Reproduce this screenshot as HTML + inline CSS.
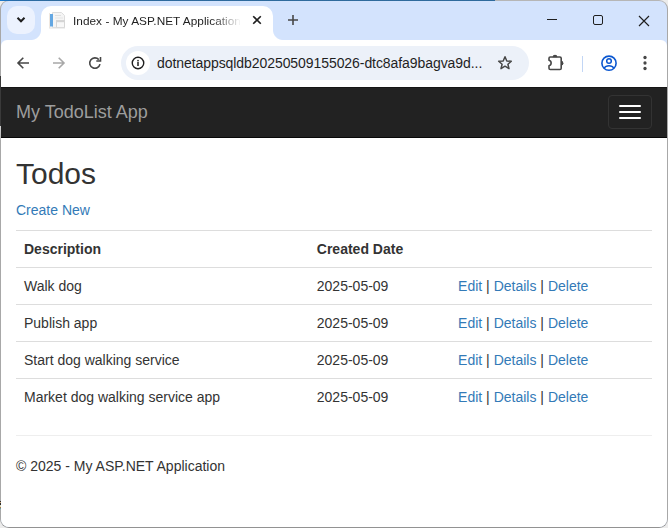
<!DOCTYPE html>
<html><head><meta charset="utf-8">
<style>
*{box-sizing:border-box}
html,body{margin:0;padding:0}
body{width:668px;height:528px;position:relative;overflow:hidden;background:#ececec;font-family:"Liberation Sans",sans-serif}
.abs{position:absolute}
#win{position:absolute;left:0;top:0;width:668px;height:528px;border:1px solid #a8a8a8;border-top-color:#b6b6b6;border-bottom-color:#929292;border-radius:9px;overflow:hidden;background:#d3e3fd}
#topline{position:absolute;left:0;top:0;width:495px;height:1px;background:linear-gradient(90deg,#1878d0 0,#2a6ca6 14px,#2f6b9e 60px,#2e6a9c 100%)}
#toolbar{position:absolute;left:0;top:39px;width:666px;height:47px;background:#fff;border-radius:6px 6px 0 0}
#viewport{position:absolute;left:0;top:86px;width:666px;height:440px;background:#fff;overflow:hidden;font-size:14px;line-height:1.42857143;color:#333}
.tabsearch{left:6px;top:5px;width:28px;height:28px;border-radius:10px;background:#ecf2fe}
.tab{left:40px;top:5px;width:232px;height:35px;background:#fff;border-radius:10px 10px 0 0}
.flare{width:10px;height:10px;top:29px}
.fl{background:radial-gradient(circle at 0 0,transparent 9.5px,#fff 10.5px)}
.fr{background:radial-gradient(circle at 100% 0,transparent 9.5px,#fff 10.5px)}
.title{left:72px;top:12px;font-size:11.8px;line-height:16px;color:#1f1f1f;white-space:nowrap;width:168px;overflow:hidden;letter-spacing:0.04px}
.title span{display:block;-webkit-mask-image:linear-gradient(90deg,#000 140px,transparent 168px)}
.url{left:156px;top:53px;font-size:14px;line-height:18px;color:#1f1f1f;white-space:nowrap;letter-spacing:-0.07px}
/* page */
.navbar{position:absolute;left:0;top:0;width:666px;height:51px;background:#222;border-bottom:1px solid #080808}
.brand{position:absolute;left:15px;top:15px;font-size:18px;line-height:20px;color:#9d9d9d}
.toggle{position:absolute;right:15px;top:8px;width:44px;height:34px;border:1px solid #333;border-radius:4px;padding:9px 10px}
.toggle i{display:block;width:22px;height:2px;background:#fff;border-radius:1px}
.toggle i+i{margin-top:4px}
.content{position:absolute;left:0;top:50px;width:666px;padding:0 15px}
h2{font-size:30px;font-weight:500;line-height:1.1;margin:20px 0 10px;font-family:inherit;color:#333}
p{margin:0 0 10px}
a{color:#337ab7;text-decoration:none}
table{width:100%;border-collapse:collapse;border-spacing:0;margin-bottom:20px}
th,td{padding:8px;line-height:1.42857143;vertical-align:top;border-top:1px solid #ddd;text-align:left}
th{font-weight:bold}
hr{margin:20px 0;border:0;border-top:1px solid #eee;height:0}
</style></head>
<body>
<div id="win">
  <!-- tab strip -->
  <div class="abs tabsearch"></div>
  <svg class="abs" style="left:12px;top:11px" width="16" height="16" viewBox="0 0 16 16"><path d="M4.5 5.8 L8 9.3 L11.5 5.8" fill="none" stroke="#1f1f1f" stroke-width="2"/></svg>
  <div class="abs tab"></div>
  <div class="abs flare fl" style="left:30px"></div>
  <div class="abs flare fr" style="left:272px"></div>
  <!-- favicon -->
  <svg class="abs" style="left:45px;top:8px" width="22" height="22" viewBox="0 0 22 22">
    <rect x="3" y="4" width="1" height="15" fill="#f0e8e0"/>
    <path d="M6.5 3.5 H15.5 L18.5 6.5 V18.5 H6.5 Z" fill="#f5f5f5" stroke="#dddddd" stroke-width="1"/>
    <rect x="4" y="5" width="3" height="12.5" fill="#64a7e2"/>
    <rect x="9" y="6" width="6" height="1" fill="#e0e0e0"/>
    <rect x="9" y="8.5" width="8" height="1" fill="#e6e6e6"/>
    <rect x="10.5" y="11.5" width="8" height="7" fill="#f8f8f8" stroke="#d6d6d6" stroke-width="1"/>
    <rect x="11" y="12" width="7" height="1.2" fill="#d4d4d4"/>
    <rect x="3" y="18.5" width="16" height="1" fill="#e2e2e2"/>
  </svg>
  <div class="abs title"><span>Index - My ASP.NET Application</span></div>
  <svg class="abs" style="left:249px;top:12px" width="14" height="14" viewBox="0 0 14 14"><path d="M3.2 3.2 L10.8 10.8 M10.8 3.2 L3.2 10.8" stroke="#1f1f1f" stroke-width="1.6"/></svg>
  <svg class="abs" style="left:284px;top:11px" width="16" height="16" viewBox="0 0 16 16"><path d="M8 3 V13 M3 8 H13" stroke="#474747" stroke-width="1.6"/></svg>
  <!-- window controls -->
  <svg class="abs" style="left:544px;top:13px" width="14" height="14" viewBox="0 0 14 14"><path d="M2 5.5 H12" stroke="#1f1f1f" stroke-width="1"/></svg>
  <svg class="abs" style="left:590px;top:13px" width="14" height="14" viewBox="0 0 14 14"><rect x="2.5" y="1.5" width="9" height="9" rx="1.5" fill="none" stroke="#1f1f1f" stroke-width="1"/></svg>
  <svg class="abs" style="left:636px;top:12.5px" width="14" height="14" viewBox="0 0 14 14"><path d="M2 2 L12 12 M12 2 L2 12" stroke="#1f1f1f" stroke-width="1.15"/></svg>

  <!-- toolbar -->
  <div id="toolbar">
    <svg class="abs" style="left:14px;top:15px" width="16" height="16" viewBox="0 0 16 16"><path d="M14 8 H3 M8.3 2.7 L3 8 L8.3 13.3" fill="none" stroke="#474747" stroke-width="1.6"/></svg>
    <svg class="abs" style="left:50px;top:15px" width="16" height="16" viewBox="0 0 16 16"><path d="M2 8 H13 M7.7 2.7 L13 8 L7.7 13.3" fill="none" stroke="#a8a8a8" stroke-width="1.6"/></svg>
    <svg class="abs" style="left:86px;top:15px" width="16" height="16" viewBox="0 0 16 16"><path d="M13 9.2 A5.2 5.2 0 1 1 11.8 4.6" fill="none" stroke="#474747" stroke-width="1.6"/><path d="M9.3 6 H13.5 V2" fill="none" stroke="#474747" stroke-width="1.6"/></svg>
    <div class="abs" style="left:120px;top:6px;width:408px;height:34px;border-radius:17px;background:#ecf1f9"></div>
    <div class="abs" style="left:125px;top:11px;width:24px;height:24px;border-radius:12px;background:#fff"></div>
    <svg class="abs" style="left:129px;top:15px" width="16" height="16" viewBox="0 0 16 16"><circle cx="8" cy="8" r="5.75" fill="none" stroke="#1f1f1f" stroke-width="1.4"/><rect x="7.25" y="6.8" width="1.5" height="4.2" fill="#1f1f1f"/><rect x="7.25" y="4.9" width="1.5" height="1.3" fill="#1f1f1f"/></svg>
    <svg class="abs" style="left:496px;top:15px" width="16" height="16" viewBox="0 0 16 16"><path d="M8 1.8 L9.8 6 L14.3 6.3 L10.9 9.2 L12 13.6 L8 11.2 L4 13.6 L5.1 9.2 L1.7 6.3 L6.2 6 Z" fill="none" stroke="#474747" stroke-width="1.5" stroke-linejoin="round"/></svg>
    <svg class="abs" style="left:543px;top:11px" width="24" height="22" viewBox="0 0 24 22"><path d="M5 7.3 Q5 6 6.3 6 H15.9 Q17.2 6 17.2 7.3 V17.2 Q17.2 18.5 15.9 18.5 H6.3 Q5 18.5 5 17.2 V14.8 A2.9 2.9 0 0 0 5 9.2 Z" fill="none" stroke="#474747" stroke-width="1.6" stroke-linejoin="round"/><path d="M8.6 6.2 A2.4 2.4 0 0 1 13.4 6.2 Z" fill="#474747"/><path d="M17 9.8 A2.4 2.4 0 0 1 17 14.6 Z" fill="#474747"/></svg>
    <div class="abs" style="left:581px;top:16px;width:1px;height:16px;background:#c2d6f5"></div>
    <svg class="abs" style="left:599px;top:14px" width="18" height="18" viewBox="0 0 18 18"><circle cx="9" cy="9.2" r="7.1" fill="none" stroke="#0b57d0" stroke-width="1.6"/><circle cx="9" cy="7" r="2.3" fill="none" stroke="#0b57d0" stroke-width="1.5"/><path d="M4.3 14 C6 11 12 11 13.7 14" fill="none" stroke="#0b57d0" stroke-width="1.5"/></svg>
    <svg class="abs" style="left:635px;top:15px" width="18" height="18" viewBox="0 0 18 18"><circle cx="9" cy="2.5" r="1.65" fill="#474747"/><circle cx="9" cy="8" r="1.65" fill="#474747"/><circle cx="9" cy="13.5" r="1.65" fill="#474747"/></svg>
  </div>
  <div class="abs url">dotnetappsqldb20250509155026-dtc8afa9bagva9d...</div>

  <!-- viewport -->
  <div id="viewport">
    <div class="navbar"><div style="position:absolute;left:0;top:0;width:666px;height:1px;background:#161616"></div>
      <div class="brand">My TodoList App</div>
      <div class="toggle"><i></i><i></i><i></i></div>
    </div>
    <div class="content">
      <h2>Todos</h2>
      <p><a>Create New</a></p>
      <table>
        <tr><th>Description</th><th>Created Date</th><th></th></tr>
        <tr><td>Walk dog</td><td>2025-05-09</td><td><a>Edit</a> | <a>Details</a> | <a>Delete</a></td></tr>
        <tr><td>Publish app</td><td>2025-05-09</td><td><a>Edit</a> | <a>Details</a> | <a>Delete</a></td></tr>
        <tr><td>Start dog walking service</td><td>2025-05-09</td><td><a>Edit</a> | <a>Details</a> | <a>Delete</a></td></tr>
        <tr><td>Market dog walking service app</td><td>2025-05-09</td><td><a>Edit</a> | <a>Details</a> | <a>Delete</a></td></tr>
      </table>
      <hr>
      <footer><p>&copy; 2025 - My ASP.NET Application</p></footer>
    </div>
  </div>
</div>
<div id="topline"></div>
<div class="abs" style="left:0;top:76px;width:1px;height:50px;background:#3a3a3a"></div>
<div class="abs" style="left:0;top:126px;width:1px;height:14px;background:linear-gradient(#d2d2d2,#b4b4b4)"></div>
<div class="abs" style="left:0;top:501px;width:1px;height:8px;background:linear-gradient(#333 0 12%,#c9a27a 12% 30%,#2e2e2e 30% 45%,#d8dcc0 45% 70%,#b8763a 70% 85%,#5a9aa8 85%)"></div>
</body></html>
